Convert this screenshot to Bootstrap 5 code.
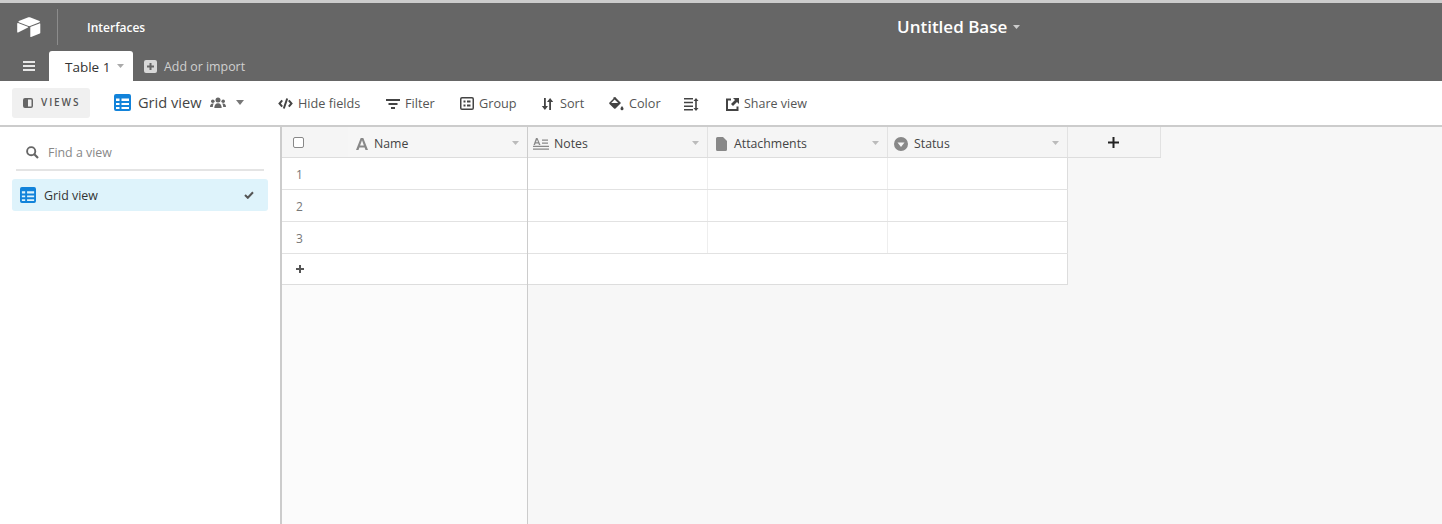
<!DOCTYPE html>
<html lang="en">
<head>
    <meta charset="UTF-8">
    <title>Untitled Base</title>
    <link href="https://cdn.jsdelivr.net/npm/bootstrap@5.3.0/dist/css/bootstrap.min.css" rel="stylesheet">
    <style>
        html, body { height: 524px; overflow: hidden; }
        body { font-family: "Open Sans", "Noto Sans", sans-serif; font-size: 13px; color: #333; background: #fff; }
        svg { display: block; flex: none; }

        .app-top { height: 81px; background: #666; border-top: 3px solid #ccc; color: #fff; }
        .top-row { height: 48px; position: relative; }
        .logo-box { width: 58px; padding-left: 17px; height: 36px; border-right: 1px solid #8c8c8c; margin-right: 29px; }
        .interfaces { font-size: 12px; font-weight: 600; margin-top: 2px; }
        .base-title { position: absolute; left: 897px; top: 12px; font-size: 17px; font-weight: 600; line-height: 24px; gap: 6px; }
        .tab-row { height: 30px; }
        .menu-btn { width: 49px; padding-left: 23px; }
        .tab-active { width: 84px; height: 30px; background: #fff; color: #333; border-radius: 3px 3px 0 0; padding-left: 16px; font-size: 13.5px; line-height: 32px; position: relative; }
        .tab-caret { position: absolute; right: 9px; top: 13px; }
        .add-import { color: #d0d0d0; margin: 2px 0 0 11px; font-size: 12.4px; gap: 7px; }

        .tool-bar { height: 46px; border-bottom: 2px solid #ccc; padding-left: 12px; color: #555; }
        .views-btn { width: 78px; height: 30px; background: #f0f0f0; border-radius: 3px; font-size: 10px; letter-spacing: 1.9px; font-weight: 600; color: #555; padding-left: 11px; gap: 8px; margin-top: -1px; }
        .view-name { margin-left: 24px; width: 164px; gap: 7px; font-size: 14.6px; color: #444; }
        .view-users { margin-left: 2px; }
        .view-caret { margin-left: 3px; }
        .tool-item { gap: 5px; font-size: 12.7px; font-weight: 500; color: #555; white-space: nowrap; margin-top: 2px; }
        .tool-hide { width: 108px; }
        .tool-filter { width: 74px; }
        .tool-group { width: 81px; }
        .tool-sort { width: 68px; }
        .tool-color { width: 75px; }
        .tool-rows { width: 42px; }
        .tool-share { font-size: 12.5px; }
        .sort-label { margin-left: 1px; }

        .work-area { height: 397px; }
        .side-pane { width: 282px; border-right: 2px solid #ccc; padding: 0 12px; }
        .find-box { height: 44px; margin: 0 4px 8px; border-bottom: 2px solid #e4e4e4; padding: 8px 0 0 10px; gap: 9px; color: #888; font-size: 12.4px; }
        .find-box span, .view-row span, .field-cell span { margin-top: 2px; }
        .view-row { height: 32px; background: #def3fb; border-radius: 3px; padding: 0 13px 0 8px; gap: 8px; color: #333; font-size: 12.4px; }
        .view-check { margin-right: 1px; }

        .grid-area { background: #f7f7f7; }
        .left-pane { width: 246px; background: #fbfbfb; border-right: 1px solid #ccc; }
        .head-row { height: 31px; border-bottom: 1px solid #ddd; background: #f5f5f5; }
        .data-row { height: 32px; background: #fff; border-bottom: 1px solid #e2e2e2; }
        .add-row { height: 31px; background: #fff; border-bottom: 1px solid #ddd; }
        .check-cell { width: 66px; padding-left: 11px; }
        .fake-check { width: 11px; height: 11px; border: 1px solid #888; border-radius: 2px; background: #fff; }
        .row-num { padding-left: 14px; color: #777; font-size: 12px; }
        .row-text { padding-top: 3px; }
        .field-cell { gap: 6px; position: relative; font-size: 12.3px; color: #444; padding-left: 6px; padding-top: 3px; }
        .name-cell { flex: 1; padding-left: 8px; background: #f6f6f6; }
        .field-col { width: 180px; border-right: 1px solid #e2e2e2; }
        .notes-cell { gap: 5px; padding-left: 5px; }
        .att-cell { gap: 7px; padding-left: 8px; }
        .plus-col { width: 93px; border-right: 1px solid #e2e2e2; padding-right: 2px; }
        .col-caret { position: absolute; right: 8px; top: 14px; }
        .data-cell { width: 180px; height: 100%; border-right: 1px solid #eee; }
        .data-cell:last-child { border-right-color: #ddd; }
        .right-w { width: 540px; }
        .add-wide { width: 540px; border-right: 1px solid #ddd; }
    </style>
</head>
<body>
    <div class="app-top">
        <div class="top-row d-flex align-items-center">
            <div class="logo-box d-flex align-items-center">
                <svg width="24" height="22" viewBox="0 0 24 22">
                    <path d="M11.4 1.3 1.8 5.100c-.5.2-.5.9 0 1.100l9.700 3.800c.5.2 1 .2 1.500 0l9.500-3.800c.5-.2.5-.9 0-1.100L12.900 1.300c-.5-.2-1-.2-1.500 0z" fill="#fff"/>
                    <path d="M13.300 11.500v8.900c0 .4.4.7.8.5l8.700-3.400c.3-.1.500-.4.500-.7V7.900c0-.4-.4-.7-.8-.5l-8.700 3.400c-.3.100-.5.400-.5.700z" fill="#fff"/>
                    <path d="M11 11.400 1.100 16.400c-.4.200-.9-.1-.9-.5V7.600c0-.4.400-.7.800-.5l9.900 3.700c.4.100.4.500.100.600z" fill="#fff"/>
                </svg>
            </div>
            <span class="interfaces">Interfaces</span>
            <div class="base-title d-flex align-items-center">Untitled Base
                <svg width="7" height="4" viewBox="0 0 7 4"><path d="M0 0h7L3.500 4z" fill="#ccc"/></svg>
            </div>
        </div>
        <div class="tab-row d-flex align-items-end">
            <div class="menu-btn align-self-center">
                <svg width="12" height="10" viewBox="0 0 12 10"><path d="M0 0h12v2H0zM0 4h12v2H0zM0 8h12v2H0z" fill="#e6e6e6"/></svg>
            </div>
            <div class="tab-active">Table 1
                <svg class="tab-caret" width="7" height="4" viewBox="0 0 7 4"><path d="M0 0h7L3.500 4z" fill="#aaa"/></svg>
            </div>
            <div class="add-import d-flex align-items-center align-self-center">
                <svg width="13" height="13" viewBox="0 0 13 13"><path fill-rule="evenodd" d="M2 0h9a2 2 0 0 1 2 2v9a2 2 0 0 1-2 2H2a2 2 0 0 1-2-2V2a2 2 0 0 1 2-2zm3.500 3v2.500H3v2h2.500V10h2V7.500H10v-2H7.500V3z" fill="#d8d8d8"/></svg>
                <span>Add or import</span>
            </div>
        </div>
    </div>

    <div class="tool-bar d-flex align-items-center">
        <div class="views-btn d-flex align-items-center">
            <svg width="10" height="10" viewBox="0 0 10 10"><path fill-rule="evenodd" d="M2 0h6a2 2 0 0 1 2 2v6a2 2 0 0 1-2 2H2a2 2 0 0 1-2-2V2a2 2 0 0 1 2-2zm3 1.500V8.500h3a.5.5 0 0 0 .5-.5V2a.5.5 0 0 0-.5-.5z" fill="#666"/></svg>
            <span>VIEWS</span>
        </div>
        <div class="view-name d-flex align-items-center">
            <svg width="17" height="17" viewBox="0 0 17 17"><path fill-rule="evenodd" d="M2 0h13a2 2 0 0 1 2 2v13a2 2 0 0 1-2 2H2a2 2 0 0 1-2-2V2a2 2 0 0 1 2-2zm0 4.500V7h3.500V4.500zm5.500 0V7H15V4.500zM2 9v2h3.500V9zm5.500 0v2H15V9zM2 13v2h3.500v-2zm5.500 0v2H15v-2z" fill="#1283da"/></svg>
            <span>Grid view</span>
            <svg class="view-users" width="16" height="12" viewBox="0 0 16 12"><g fill="#666"><circle cx="8" cy="3" r="2.500"/><circle cx="2.800" cy="4.300" r="1.800"/><circle cx="13.200" cy="4.300" r="1.800"/><path d="M4.300 11c0-3 1.500-4.800 3.700-4.800s3.700 1.800 3.700 4.800zM0 10c0-2.200 1-3.600 2.800-3.600.4 0 .7.100 1 .2-.7 1-1 2.100-1 3.400zM16 10c0-2.200-1-3.600-2.800-3.600-.4 0-.7.100-1 .2.700 1 1 2.100 1 3.400z"/></g></svg>
            <svg class="view-caret" width="8" height="5" viewBox="0 0 8 5"><path d="M0 0h8L4 5z" fill="#777"/></svg>
        </div>
        <div class="tool-item tool-hide d-flex align-items-center">
            <svg width="15" height="11" viewBox="0 0 15 11"><path d="M4.200 2.300 1.500 5.500l2.700 3.200M10.800 2.300l2.700 3.200-2.700 3.200M9.200.5 5.800 10.500" fill="none" stroke="#444" stroke-width="2"/></svg>
            <span>Hide fields</span>
        </div>
        <div class="tool-item tool-filter d-flex align-items-center">
            <svg width="14" height="10" viewBox="0 0 14 10"><path d="M0 0h14v2H0zM2.500 4h9v2h-9zM5 8h4v2H5z" fill="#444"/></svg>
            <span>Filter</span>
        </div>
        <div class="tool-item tool-group d-flex align-items-center">
            <svg width="14" height="13" viewBox="0 0 14 13"><path fill-rule="evenodd" d="M2 0h10a2 2 0 0 1 2 2v9a2 2 0 0 1-2 2H2a2 2 0 0 1-2-2V2a2 2 0 0 1 2-2zm0 1.500a.5.5 0 0 0-.5.500v9a.5.5 0 0 0 .5.500h10a.5.5 0 0 0 .5-.5V2a.5.5 0 0 0-.5-.5zM3.500 3.500h2v2h-2zm3.500 0h3.500v2H7zm-3.500 4h2v2h-2zm3.500 0h3.500v2H7z" fill="#444"/></svg>
            <span>Group</span>
        </div>
        <div class="tool-item tool-sort d-flex align-items-center">
            <svg width="13" height="12" viewBox="0 0 13 12"><path d="M3 0h1.800v8H7L3.900 12 .8 8H3zM8.200 12h1.800V4h2.200L9.100 0 6 4h2.200z" fill="#444"/></svg>
            <span class="sort-label">Sort</span>
        </div>
        <div class="tool-item tool-color d-flex align-items-center">
            <svg width="15" height="14" viewBox="0 0 15 14"><path d="M5 .3 6.300 0l1 1.300L12 6l-5.500 5.500a1 1 0 0 1-1.400 0L.5 7a1 1 0 0 1 0-1.400L4.600 1.500 4 .9zM5.600 2.600 2.200 6h7z" fill="#444" fill-rule="evenodd"/><path d="M13 9c.8 1.100 1.500 1.900 1.500 2.700a1.500 1.500 0 0 1-3 0c0-.8.700-1.600 1.500-2.700z" fill="#444"/></svg>
            <span>Color</span>
        </div>
        <div class="tool-item tool-rows d-flex align-items-center">
            <svg width="15" height="13" viewBox="0 0 15 13"><path d="M0 0h9v1.500H0zM0 3.700h9v1.500H0zM0 7.400h9v1.500H0zM0 11.100h9v1.500H0zM12 0l2.500 3h-1.700v7h1.700L12 13 9.500 10h1.700V3H9.500z" fill="#444"/></svg>
        </div>
        <div class="tool-item tool-share d-flex align-items-center">
            <svg width="13" height="13" viewBox="0 0 13 13"><path d="M5 1.500H1v10.500h10.500V8.500" fill="none" stroke="#444" stroke-width="2"/><path d="M7 0h6v6l-2-2-4 4-2-2 4-4z" fill="#444"/></svg>
            <span>Share view</span>
        </div>
    </div>

    <div class="work-area d-flex">
        <div class="side-pane">
            <div class="find-box d-flex align-items-center">
                <svg width="13" height="13" viewBox="0 0 13 13"><circle cx="5.200" cy="5.200" r="4.100" fill="none" stroke="#666" stroke-width="1.900"/><path d="M8.300 8.300 12 12" stroke="#666" stroke-width="2.200"/></svg>
                <span>Find a view</span>
            </div>
            <div class="view-row d-flex align-items-center">
                <svg width="16" height="16" viewBox="0 0 17 17"><path fill-rule="evenodd" d="M2 0h13a2 2 0 0 1 2 2v13a2 2 0 0 1-2 2H2a2 2 0 0 1-2-2V2a2 2 0 0 1 2-2zm0 4.500V7h3.500V4.500zm5.500 0V7H15V4.500zM2 9v2h3.500V9zm5.500 0v2H15V9zM2 13v2h3.500v-2zm5.500 0v2H15v-2z" fill="#1283da"/></svg>
                <span class="flex-grow-1">Grid view</span>
                <svg class="view-check" width="10" height="8" viewBox="0 0 10 8"><path d="M1 4l2.800 2.800L9 1.200" fill="none" stroke="#555" stroke-width="2"/></svg>
            </div>
        </div>
        <div class="grid-area flex-grow-1 d-flex">
            <div class="left-pane">
                <div class="head-row d-flex">
                    <div class="check-cell d-flex align-items-center"><div class="fake-check"></div></div>
                    <div class="field-cell name-cell d-flex align-items-center">
                        <svg width="12" height="12" viewBox="0 0 12 12"><path d="M4.700 0h2.600L12 12H9.500l-.9-2.600H3.400L2.500 12H0zM4.100 7.400h3.800L6 2.300z" fill="#888"/></svg>
                        <span>Name</span>
                        <svg class="col-caret" width="7" height="4" viewBox="0 0 7 4"><path d="M0 0h7L3.500 4z" fill="#bbb"/></svg>
                    </div>
                </div>
                <div class="data-row row-text d-flex align-items-center row-num">1</div>
                <div class="data-row row-text d-flex align-items-center row-num">2</div>
                <div class="data-row row-text d-flex align-items-center row-num">3</div>
                <div class="add-row d-flex align-items-center row-num">
                    <svg width="8" height="8" viewBox="0 0 8 8"><path d="M3 0h2v3h3v2H5v3H3V5H0V3h3z" fill="#555"/></svg>
                </div>
            </div>
            <div>
                <div class="head-row d-flex">
                    <div class="field-cell notes-cell field-col d-flex align-items-center">
                        <svg width="16" height="12" viewBox="0 0 16 12"><path d="M3 0h1.500L7.500 7H6l-.6-1.600H2.600L2 7H.5zm-.1 4.200h2.200L4 1.800zM9 1.500h6v1.200H9zM9 4.500h6v1.200H9zM0 7.700h16v1.200H0zM0 10.500h16v1.200H0z" fill="#888"/></svg>
                        <span>Notes</span>
                        <svg class="col-caret" width="7" height="4" viewBox="0 0 7 4"><path d="M0 0h7L3.500 4z" fill="#bbb"/></svg>
                    </div>
                    <div class="field-cell att-cell field-col d-flex align-items-center">
                        <svg width="11" height="14" viewBox="0 0 11 14"><path d="M1.500 0H7l4 4v8.500a1.500 1.500 0 0 1-1.500 1.500h-8A1.500 1.500 0 0 1 0 12.500v-11A1.500 1.500 0 0 1 1.500 0z" fill="#888"/></svg>
                        <span>Attachments</span>
                        <svg class="col-caret" width="7" height="4" viewBox="0 0 7 4"><path d="M0 0h7L3.500 4z" fill="#bbb"/></svg>
                    </div>
                    <div class="field-cell field-col d-flex align-items-center">
                        <svg width="14" height="14" viewBox="0 0 14 14"><path fill-rule="evenodd" d="M7 0a7 7 0 1 1 0 14A7 7 0 0 1 7 0zM3.500 5.500 7 10l3.500-4.500z" fill="#888"/></svg>
                        <span>Status</span>
                        <svg class="col-caret" width="7" height="4" viewBox="0 0 7 4"><path d="M0 0h7L3.500 4z" fill="#bbb"/></svg>
                    </div>
                    <div class="plus-col d-flex align-items-center justify-content-center">
                        <svg width="11" height="11" viewBox="0 0 11 11"><path d="M4.500 0h2v4.500H11v2H6.500V11h-2V6.500H0v-2h4.500z" fill="#222"/></svg>
                    </div>
                </div>
                <div class="data-row right-w d-flex"><div class="data-cell"></div><div class="data-cell"></div><div class="data-cell"></div></div>
                <div class="data-row right-w d-flex"><div class="data-cell"></div><div class="data-cell"></div><div class="data-cell"></div></div>
                <div class="data-row right-w d-flex"><div class="data-cell"></div><div class="data-cell"></div><div class="data-cell"></div></div>
                <div class="add-row add-wide"></div>
            </div>
        </div>
    </div>

    <script src="https://cdn.jsdelivr.net/npm/bootstrap@5.3.0/dist/js/bootstrap.bundle.min.js"></script>
</body>
</html>
